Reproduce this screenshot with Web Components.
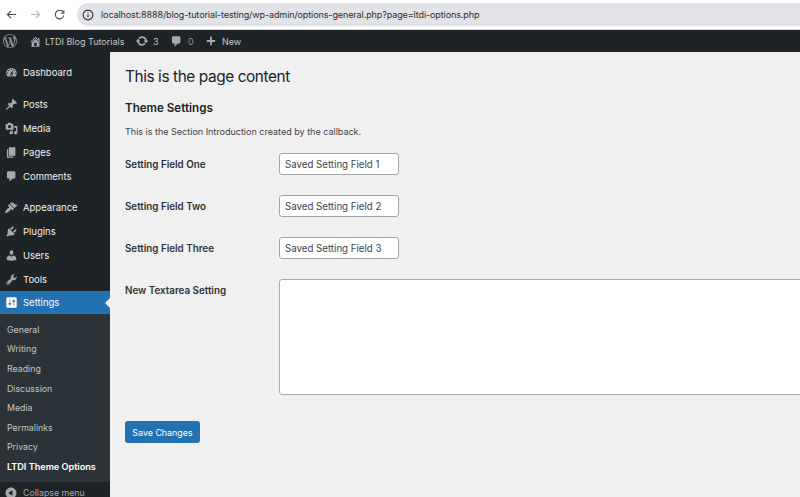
<!DOCTYPE html>
<html lang="en">
<head>
<meta charset="utf-8">
<title>LTDI Theme Options</title>
<style>
  html, body {
    margin: 0;
    height: 100%;
    overflow: hidden;
    background: #f0f0f1;
    font-family: Inter, "Liberation Sans", sans-serif;
  }
</style>
</head>
<body>
<wp-screen></wp-screen>

<script>
const icons = {
  wordpress: 'M20 10c0-5.51-4.49-10-10-10C4.48 0 0 4.49 0 10c0 5.52 4.48 10 10 10 5.51 0 10-4.48 10-10zM7.78 15.37L4.37 6.22c.55-.02 1.17-.08 1.17-.08.5-.06.44-1.13-.06-1.11 0 0-1.45.11-2.37.11-.18 0-.37 0-.58-.01C4.12 2.69 6.87 1.11 10 1.11c2.33 0 4.45.87 6.05 2.34-.68-.11-1.65.39-1.65 1.58 0 .74.45 1.36.9 2.1.35.61.55 1.36.55 2.46 0 1.49-1.4 5-1.4 5l-3.03-8.37c.54-.02.82-.17.82-.17.5-.05.44-1.25-.06-1.22 0 0-1.44.12-2.38.12-.87 0-2.33-.12-2.33-.12-.5-.03-.56 1.2-.06 1.22l.92.08 1.26 3.41zM17.41 10c.24-.64.74-1.87.43-4.25.7 1.29 1.05 2.71 1.05 4.25 0 3.29-1.73 6.24-4.4 7.78.97-2.59 1.94-5.2 2.92-7.78zM6.1 18.09C3.12 16.65 1.11 13.53 1.11 10c0-1.3.23-2.48.72-3.59C3.25 10.3 4.67 14.2 6.1 18.09zm4.03-6.63l2.58 6.98c-.86.29-1.76.45-2.71.45-.79 0-1.57-.11-2.29-.33.81-2.38 1.62-4.74 2.42-7.1z',
  home: 'M16 8.5l1.53 1.53-1.06 1.06L10 4.62l-6.47 6.47-1.06-1.06L10 2.5l4 4v-2h2v4zm-6-2.46l6 5.99V18H4v-5.97zM12 17v-5H8v5h4z',
  update: 'M10.2 3.28c3.53 0 6.43 2.61 6.92 6h2.08l-3.5 4-3.5-4h2.32c-.45-1.97-2.21-3.45-4.32-3.45-1.45 0-2.73.71-3.54 1.78L4.95 5.66C6.23 4.2 8.11 3.28 10.2 3.28zm-.4 13.44c-3.52 0-6.43-2.61-6.92-6H.8l3.5-4c1.17 1.33 2.33 2.67 3.5 4H5.48c.45 1.97 2.21 3.45 4.32 3.45 1.45 0 2.73-.71 3.54-1.78l1.71 1.95c-1.28 1.46-3.15 2.38-5.25 2.38z',
  comment: 'M5 2h9c1.1 0 2 .9 2 2v7c0 1.1-.9 2-2 2h-2l-5 5v-5H5c-1.1 0-2-.9-2-2V4c0-1.1.9-2 2-2z',
  plus: 'M8.5 3h3v5.5H17v3h-5.5V17h-3v-5.5H3v-3h5.5z',
  dashboard: 'M3.76 16h12.48c1.1-1.37 1.76-3.11 1.76-5 0-4.42-3.58-8-8-8s-8 3.58-8 8c0 1.89.66 3.63 1.76 5zM10 4c.55 0 1 .45 1 1s-.45 1-1 1-1-.45-1-1 .45-1 1-1zM6 6c.55 0 1 .45 1 1s-.45 1-1 1-1-.45-1-1 .45-1 1-1zm8 0c.55 0 1 .45 1 1s-.45 1-1 1-1-.45-1-1 .45-1 1-1zm-5.37 5.55L12 7v6c0 1.1-.9 2-2 2s-2-.9-2-2c0-.57.24-1.08.63-1.45zM4 10c.55 0 1 .45 1 1s-.45 1-1 1-1-.45-1-1 .45-1 1-1zm12 0c.55 0 1 .45 1 1s-.45 1-1 1-1-.45-1-1 .45-1 1-1zm-5 3c0-.55-.45-1-1-1s-1 .45-1 1 .45 1 1 1 1-.45 1-1z',
  pin: 'M10.44 3.02l1.82-1.82 6.36 6.35-1.83 1.82c-1.05-.68-2.48-.57-3.41.36l-.75.75c-.92.93-1.04 2.35-.35 3.41l-1.83 1.82-2.41-2.41-2.8 2.79c-.42.42-3.38 2.71-3.8 2.29s1.86-3.39 2.28-3.81l2.79-2.79L4.1 9.36l1.83-1.82c1.05.69 2.48.57 3.4-.36l.75-.75c.93-.92 1.05-2.35.36-3.41z',
  media: 'M13 11V4c0-.55-.45-1-1-1h-1.67L9 1H5L3.67 3H2c-.55 0-1 .45-1 1v7c0 .55.45 1 1 1h10c.55 0 1-.45 1-1zM7 4.5c1.38 0 2.5 1.12 2.5 2.5S8.38 9.5 7 9.5 4.5 8.38 4.5 7 5.62 4.5 7 4.5zM14 6h5v10.5c0 1.38-1.12 2.5-2.5 2.5S14 17.88 14 16.5s1.12-2.5 2.5-2.5c.17 0 .34.02.5.05V9h-3V6zm-4 8.05V13h2v3.5c0 1.38-1.12 2.5-2.5 2.5S7 17.88 7 16.5 8.12 14 9.5 14c.17 0 .34.02.5.05z',
  pages: 'M6 15V2h10v13H6zm-1 1h8v2H3V5h2v11z',
  appearance: 'M14.48 11.06L7.41 3.99l1.5-1.5c.5-.56 2.3-.47 3.51.32 1.21.8 1.43 1.28 2.91 2.1 1.18.64 2.45 1.26 4.45.85zm-.71.71L6.7 4.7 4.93 6.47c-.39.39-.39 1.02 0 1.41l1.06 1.06c.39.39.39 1.03 0 1.42-.6.6-1.43 1.11-2.21 1.69-.35.26-.7.53-1.01.84C1.43 13.23 0 18.04.5 18.5s4.27-.93 5.68-2.33c.31-.31.58-.66.84-1.01.58-.78 1.09-1.61 1.69-2.21.39-.39 1.02-.39 1.41 0l1.06 1.06c.39.39 1.02.39 1.41 0z',
  plugins: 'M13.11 4.36L9.87 7.6 8 5.73l3.24-3.24c.35-.34 1.05-.2 1.56.32.52.51.66 1.21.31 1.55zm-8 1.77l.91-1.12 9.01 9.01-1.19.84c-.71.71-2.63 1.16-3.82 1.16H6.14L4.9 17.26c-.59.59-1.54.59-2.12 0-.59-.58-.59-1.53 0-2.12l1.24-1.24v-3.88c0-1.13.4-3.19 1.09-3.89zm7.26 3.97l3.24-3.24c.34-.35 1.04-.21 1.55.31.52.51.66 1.21.31 1.55l-3.24 3.25z',
  users: 'M10 9.25c-2.27 0-2.73-3.44-2.73-3.44C7 4.02 7.82 2 9.97 2c2.16 0 2.98 2.02 2.71 3.81 0 0-.41 3.44-2.68 3.44zm0 2.57L12.72 10c2.39 0 4.52 2.33 4.52 4.53v2.49s-3.65 1.13-7.24 1.13c-3.65 0-7.24-1.13-7.24-1.13v-2.49c0-2.25 1.94-4.48 4.47-4.48z',
  tools: 'M16.68 9.77c-1.34 1.34-3.3 1.67-4.95.99l-5.41 6.52c-.99.99-2.59.99-3.58 0s-.99-2.59 0-3.57l6.52-5.42c-.68-1.65-.35-3.61.99-4.95 1.28-1.28 3.12-1.62 4.72-1.06l-2.89 2.89 2.82 2.82 2.86-2.87c.53 1.58.18 3.39-1.08 4.67zM3.81 16.21c.4.39 1.04.39 1.43 0 .4-.4.4-1.04 0-1.43-.39-.4-1.03-.4-1.43 0-.39.39-.39 1.03 0 1.43z',
  settings: 'M18 16V4c0-1.1-.9-2-2-2H4c-1.1 0-2 .9-2 2v12c0 1.1.9 2 2 2h12c1.1 0 2-.9 2-2zM8 11h1c.55 0 1 .45 1 1s-.45 1-1 1H8v1.5c0 .28-.22.5-.5.5s-.5-.22-.5-.5V13H6c-.55 0-1-.45-1-1s.45-1 1-1h1V5.5c0-.28.22-.5.5-.5s.5.22.5.5V11zm5-2h-1c-.55 0-1-.45-1-1s.45-1 1-1h1V5.5c0-.28.22-.5.5-.5s.5.22.5.5V7h1c.55 0 1 .45 1 1s-.45 1-1 1h-1v5.5c0 .28-.22.5-.5.5s-.5-.22-.5-.5V9z',
  collapse: 'M10 2.16c4.33 0 7.84 3.51 7.84 7.84s-3.51 7.84-7.84 7.84S2.16 14.33 2.16 10 5.71 2.16 10 2.16zm2 11.72V6.12L6.18 9.97z'
}

/**
 * Returns the svg markup for one of the dashicons above.
 *
 * @param {string} name - The icon name.
 * @param {number} size - Size in pixels.
 * @returns {string} The svg markup.
 */
const dashicon = (name, size) => `<svg width="${size}" height="${size}" viewBox="0 0 20 20" fill="currentColor"><path fill-rule="evenodd" d="${icons[name]}"/></svg>`

customElements.define('browser-bar',
  /**
   * The chrome toolbar with the address field.
   */
  class extends HTMLElement {
    constructor () {
      super()
      this.attachShadow({ mode: 'open' }).innerHTML = `
        <style>
          :host {
            display: flex;
            align-items: center;
            height: 29px;
            padding: 0 0 0 6px;
            background: #fff;
            border-bottom: 1px solid #d9dbdf;
            box-sizing: content-box;
          }
          svg { display: block; flex: none; }
          .nav { display: flex; gap: 13px; width: 71px; }
          .url {
            flex: 1;
            display: flex;
            align-items: center;
            gap: 7px;
            height: 23px;
            padding-left: 5px;
            background: #e1e3e7;
            border-radius: 12px 0 0 12px;
            font-size: 9px;
            letter-spacing: -0.1px;
            color: #2b2d31;
            white-space: nowrap;
          }
        </style>
        <div class="nav">
          <svg width="11" height="11" viewBox="0 0 12 12" fill="none" stroke="#45484d" stroke-width="1.2"><path d="M11 6H1.5M5.5 2 1.5 6l4 4"/></svg>
          <svg width="11" height="11" viewBox="0 0 12 12" fill="none" stroke="#b4b6ba" stroke-width="1.2"><path d="M1 6h9.5M6.5 2l4 4-4 4"/></svg>
          <svg width="11" height="11" viewBox="0 0 12 12" fill="none" stroke="#45484d" stroke-width="1.2"><path d="M10.4 4.2A4.7 4.7 0 1 0 10.7 6.8"/><path d="M10.8 1.4v3.2H7.6" stroke-width="1.1"/></svg>
        </div>
        <div class="url">
          <svg width="12" height="12" viewBox="0 0 12 12" fill="none" stroke="#2b2d31" stroke-width="1.1"><circle cx="6" cy="6" r="4.9"/><path d="M6 5.3v3.2M6 3.2v1.1"/></svg>
          <span>localhost:8888/blog-tutorial-testing/wp-admin/options-general.php?page=ltdi-options.php</span>
        </div>
      `
    }
  })

customElements.define('admin-bar',
  /**
   * The dark WordPress toolbar.
   */
  class extends HTMLElement {
    constructor () {
      super()
      this.attachShadow({ mode: 'open' }).innerHTML = `
        <style>
          :host {
            display: flex;
            align-items: center;
            height: 22px;
            padding-left: 3px;
            background: #1d2327;
            color: #c3c4c7;
            font-size: 9px;
            white-space: nowrap;
          }
          svg { display: block; flex: none; color: #a7aaad; }
          .item { display: flex; align-items: center; }
          .dim { color: #8c8f94; }
          .logo svg { color: #8c8f94; }
        </style>
        <span class="item logo" style="width:26px">${dashicon('wordpress', 14)}</span>
        <span class="item" style="gap:3px;width:106px">${dashicon('home', 13)}LTDI Blog Tutorials</span>
        <span class="item" style="gap:4px;width:35px">${dashicon('update', 14)}3</span>
        <span class="item dim" style="gap:5px;width:35px">${dashicon('comment', 13)}0</span>
        <span class="item" style="gap:5px">${dashicon('plus', 12)}New</span>
      `
    }
  })

customElements.define('menu-item',
  /**
   * One row of the admin menu, the label goes in the slot.
   */
  class extends HTMLElement {
    constructor () {
      super()
      const current = this.hasAttribute('current')
      this.attachShadow({ mode: 'open' }).innerHTML = `
        <style>
          :host {
            display: flex;
            align-items: center;
            gap: 5px;
            height: 24px;
            padding-left: 5px;
            color: #f0f0f1;
            font-size: 9.5px;
            position: relative;
          }
          :host([current]) { height: 23.4px; background: #2271b1; color: #fff; }
          :host([gap="8"]) { margin-top: 8px; }
          :host([gap="7"]) { margin-top: 7px; }
          svg { display: block; flex: none; color: ${current ? '#fff' : '#a7aaad'}; }
          .arrow {
            position: absolute;
            right: 0;
            top: 7px;
            border: 5px solid transparent;
            border-right: 5px solid #f0f0f1;
            border-left: 0;
          }
        </style>
        ${dashicon(this.getAttribute('icon'), 13)}
        <slot></slot>
        ${current ? '<span class="arrow"></span>' : ''}
      `
    }
  })

customElements.define('sub-menu',
  /**
   * The lighter block of links under the current menu item.
   */
  class extends HTMLElement {
    constructor () {
      super()
      this.attachShadow({ mode: 'open' }).innerHTML = `
        <style>
          :host {
            display: block;
            padding: 5.4px 0 5.4px 7px;
            background: #2c3338;
            color: #c3c4c7;
            font-size: 8.8px;
            line-height: 19.6px;
          }
          ::slotted(div) { height: 19.6px; white-space: nowrap; }
          ::slotted(.on) { color: #fff; font-size: 9.1px; font-weight: 600; }
        </style>
        <slot></slot>
      `
    }
  })

customElements.define('admin-menu',
  /**
   * The left column of the admin screen.
   */
  class extends HTMLElement {
    constructor () {
      super()
      this.attachShadow({ mode: 'open' }).innerHTML = `
        <style>
          :host {
            display: block;
            flex: none;
            width: 110px;
            padding-top: 8px;
            background: #1d2327;
            overflow: hidden;
          }
          .collapse {
            display: flex;
            align-items: center;
            gap: 5px;
            height: 22px;
            padding-left: 4px;
            color: #a7aaad;
            font-size: 8.8px;
          }
          svg { display: block; flex: none; }
        </style>
        <slot></slot>
        <div class="collapse">${dashicon('collapse', 14)}<span>Collapse menu</span></div>
      `
    }
  })

customElements.define('setting-row',
  /**
   * A label with its field, the field goes in the slot.
   */
  class extends HTMLElement {
    constructor () {
      super()
      this.attachShadow({ mode: 'open' }).innerHTML = `
        <style>
          :host {
            display: grid;
            grid-template-columns: 154px 1fr;
            margin-bottom: 20px;
          }
          .label {
            padding-top: 6px;
            color: #2c3338;
            font-size: 9.8px;
            font-weight: 600;
            line-height: 12px;
          }
        </style>
        <div class="label">${this.getAttribute('label')}</div>
        <slot></slot>
      `
    }
  })

customElements.define('text-field',
  /**
   * Shows a saved value in an input like box.
   */
  class extends HTMLElement {
    constructor () {
      super()
      this.attachShadow({ mode: 'open' }).innerHTML = `
        <style>
          :host {
            display: flex;
            align-items: center;
            box-sizing: border-box;
            width: 120px;
            height: 22px;
            padding-left: 5px;
            background: #fff;
            border: 1px solid #a2a4a8;
            border-radius: 3px;
            color: #3c434a;
            font-size: 9.7px;
            white-space: nowrap;
          }
        </style>
        <slot></slot>
      `
    }
  })

customElements.define('text-box',
  /**
   * The empty textarea, it runs past the right side of the window.
   */
  class extends HTMLElement {
    constructor () {
      super()
      this.attachShadow({ mode: 'open' }).innerHTML = `
        <style>
          :host {
            display: block;
            box-sizing: border-box;
            width: 540px;
            height: 115.5px;
            background: #fff;
            border: 1px solid #a8aaad;
            border-radius: 3px;
          }
        </style>
      `
    }
  })

customElements.define('save-button',
  /**
   * The primary button.
   */
  class extends HTMLElement {
    constructor () {
      super()
      this.attachShadow({ mode: 'open' }).innerHTML = `
        <style>
          :host {
            display: inline-flex;
            align-items: center;
            justify-content: center;
            box-sizing: border-box;
            width: 75px;
            height: 22px;
            background: #2271b1;
            border-radius: 3px;
            color: #fff;
            font-size: 8.9px;
          }
        </style>
        <slot></slot>
      `
    }
  })

customElements.define('settings-page',
  /**
   * The content area to the right of the menu.
   */
  class extends HTMLElement {
    constructor () {
      super()
      this.attachShadow({ mode: 'open' }).innerHTML = `
        <style>
          :host {
            display: block;
            flex: 1;
            min-width: 0;
            padding: 15px 0 0 15px;
            background: #f0f0f1;
            color: #1d2327;
            overflow: hidden;
          }
          h1 { margin: 0; font-size: 15.4px; font-weight: 400; letter-spacing: -0.42px; line-height: 20px; }
          h2 { margin: 13px 0 0; font-size: 11.6px; font-weight: 600; line-height: 16px; }
          p { margin: 9px 0 14px; color: #3c434a; font-size: 9px; line-height: 14px; white-space: nowrap; }
          .save { margin-top: 25px; }
        </style>
        <h1>This is the page content</h1>
        <h2>Theme Settings</h2>
        <p>This is the Section Introduction created by the callback.</p>
        <slot></slot>
        <div class="save"><slot name="save"></slot></div>
      `
    }
  })

customElements.define('wp-screen',
  /**
   * The whole screenshot.
   */
  class extends HTMLElement {
    constructor () {
      super()
      this.attachShadow({ mode: 'open' }).innerHTML = `
        <style>
          :host {
            display: flex;
            flex-direction: column;
            height: 497px;
            overflow: hidden;
          }
          .body { display: flex; flex: 1; min-height: 0; }
        </style>
        <browser-bar></browser-bar>
        <admin-bar></admin-bar>
        <div class="body">
          <admin-menu>
            <menu-item icon="dashboard">Dashboard</menu-item>
            <menu-item icon="pin" gap="8">Posts</menu-item>
            <menu-item icon="media">Media</menu-item>
            <menu-item icon="pages">Pages</menu-item>
            <menu-item icon="comment">Comments</menu-item>
            <menu-item icon="appearance" gap="7">Appearance</menu-item>
            <menu-item icon="plugins">Plugins</menu-item>
            <menu-item icon="users">Users</menu-item>
            <menu-item icon="tools">Tools</menu-item>
            <menu-item icon="settings" current>Settings</menu-item>
            <sub-menu>
              <div>General</div>
              <div>Writing</div>
              <div>Reading</div>
              <div>Discussion</div>
              <div>Media</div>
              <div>Permalinks</div>
              <div>Privacy</div>
              <div class="on">LTDI Theme Options</div>
            </sub-menu>
          </admin-menu>
          <settings-page>
            <setting-row label="Setting Field One"><text-field>Saved Setting Field 1</text-field></setting-row>
            <setting-row label="Setting Field Two"><text-field>Saved Setting Field 2</text-field></setting-row>
            <setting-row label="Setting Field Three"><text-field>Saved Setting Field 3</text-field></setting-row>
            <setting-row label="New Textarea Setting"><text-box></text-box></setting-row>
            <save-button slot="save">Save Changes</save-button>
          </settings-page>
        </div>
      `
    }
  })
</script>
</body>
</html>
